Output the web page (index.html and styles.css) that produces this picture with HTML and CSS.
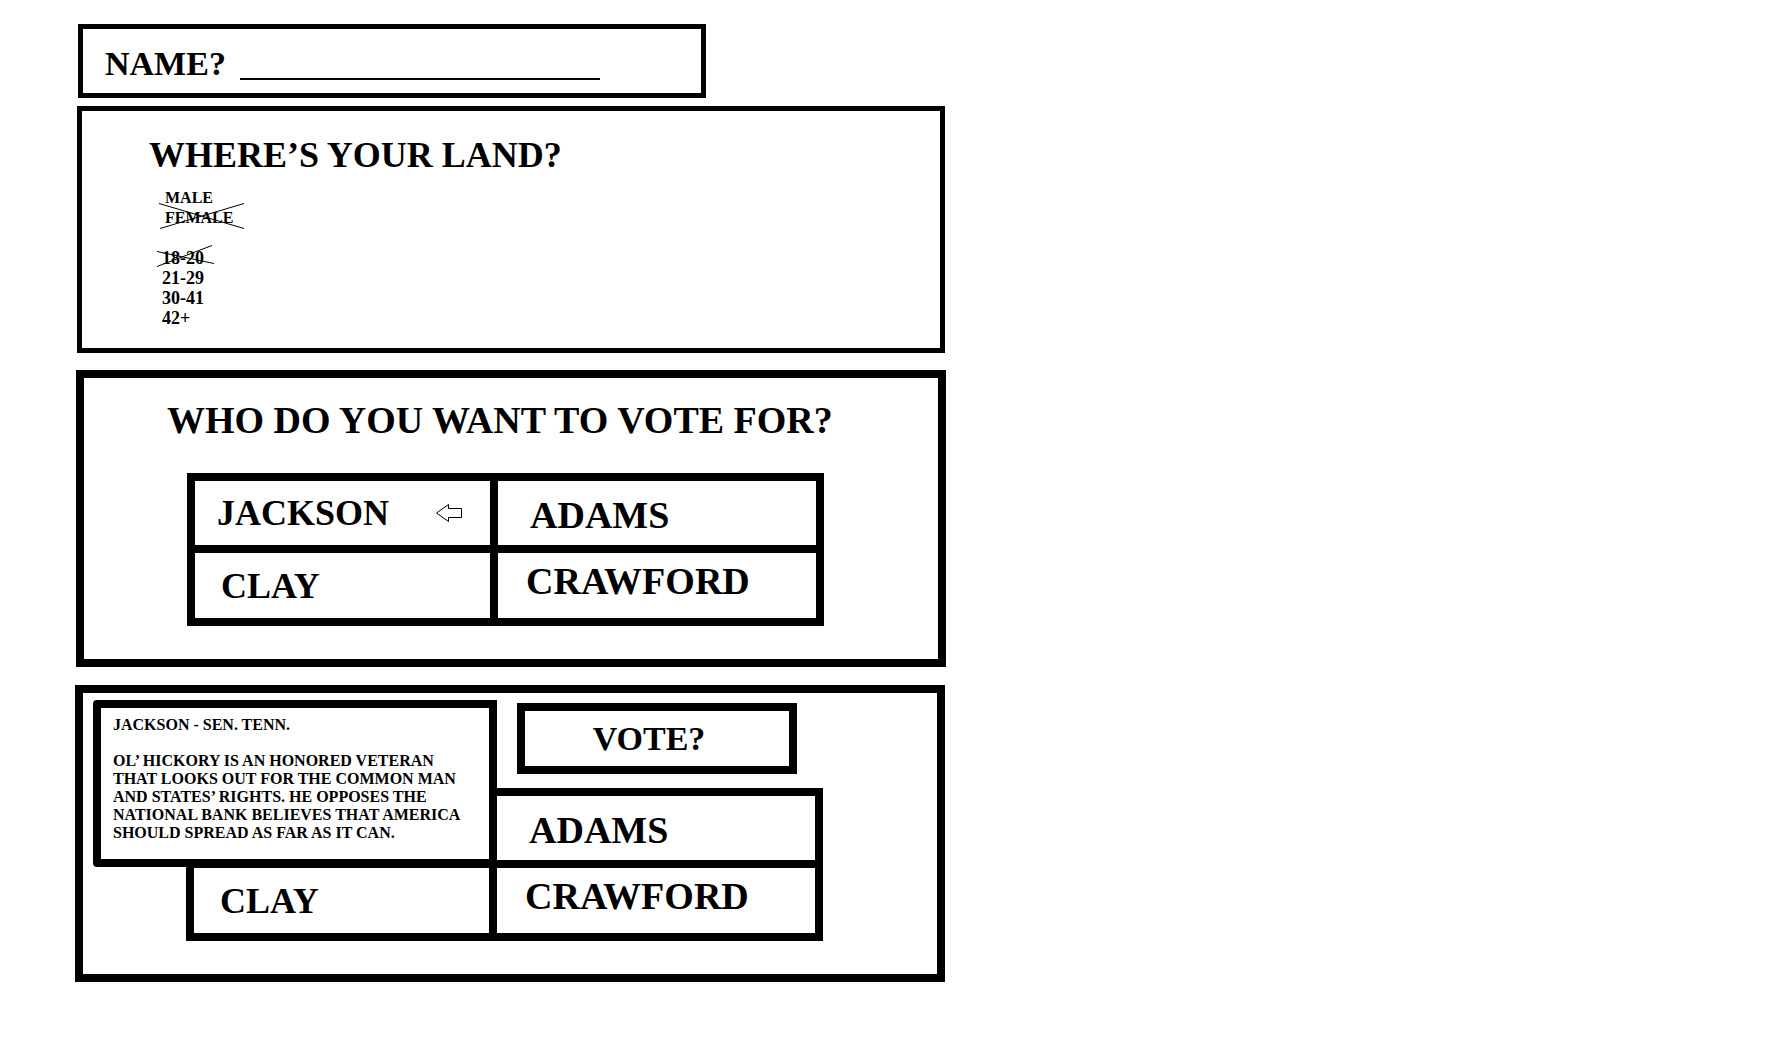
FILE: index.html
```html
<!DOCTYPE html>
<html lang="en">
<head>
<meta charset="utf-8">
<title>Ballot</title>
<link rel="stylesheet" href="styles.css">
</head>
<body>
<main class="ballot">
  <form class="name-panel">
    <label for="voter">NAME?</label>
    <input class="name-input" id="voter" type="text">
  </form>

  <section class="land-panel">
    <h2 class="title">WHERE’S YOUR LAND?</h2>
    <ul class="options sexes">
      <li>MALE</li>
      <li class="struck">FEMALE
        <svg class="cross cross-wide" width="86" height="26" viewBox="0 0 86 26" aria-hidden="true"><path d="M0 0.5 85 25.5M1 25.5 85 0.5"/></svg>
      </li>
    </ul>
    <ul class="options ages">
      <li class="struck">18-20
        <svg class="cross" width="58" height="22" viewBox="0 0 58 22" aria-hidden="true"><path d="M0 6.500 57 18.500M0 21.500 55 0.500"/></svg>
      </li>
      <li>21-29</li>
      <li>30-41</li>
      <li>42+</li>
    </ul>
  </section>

  <section class="panel choose-panel">
    <h2 class="title title-large">WHO DO YOU WANT TO VOTE FOR?</h2>
    <div class="candidates">
      <button class="candidate" type="button">JACKSON
        <svg width="26" height="18" viewBox="0 0 26 18" aria-hidden="true"><path d="M.5 9 12.500.5V4.500H25.500V13.500H12.500V17.500Z"/></svg>
      </button>
      <button class="candidate right lowered" type="button">ADAMS</button>
      <button class="candidate left" type="button">CLAY</button>
      <button class="candidate right raised" type="button">CRAWFORD</button>
    </div>
  </section>

  <section class="panel confirm-panel">
    <div class="actions"><button class="vote" type="button">VOTE?</button></div>
    <div class="candidates">
      <div class="candidate selected">
        <article class="bio">
          <h3>JACKSON - SEN. TENN.</h3>
          <p>OL’ HICKORY IS AN HONORED VETERAN THAT LOOKS OUT FOR THE COMMON MAN AND STATES’ RIGHTS. HE OPPOSES THE NATIONAL BANK BELIEVES THAT AMERICA SHOULD SPREAD AS FAR AS IT CAN.</p>
        </article>
      </div>
      <button class="candidate right lowered" type="button">ADAMS</button>
      <button class="candidate left" type="button">CLAY</button>
      <button class="candidate right raised" type="button">CRAWFORD</button>
    </div>
  </section>
</main>
</body>
</html>
```
FILE: styles.css
```css
* {
  box-sizing: border-box;
}

body {
  margin: 0;
  background: #fff;
  color: #000;
  font: bold 16px/20px "Liberation Serif", serif;
}

h2, h3, p, ul {
  margin: 0;
  padding: 0;
  font-weight: bold;
}

button, input {
  margin: 0;
  border: 0;
  border-radius: 0;
  background: #fff;
  color: inherit;
  font: inherit;
}

svg {
  fill: none;
  stroke: #000;
  stroke-width: 1;
}

.ballot {
  width: calc(50% - 16px);
  min-width: 800px;
  margin: 24px 0 0 76px;
}

.title {
  font-size: 36px;
  line-height: 32px;
  white-space: nowrap;
}

.title-large {
  font-size: 38px;
}

/* Name */
.name-panel {
  display: flex;
  align-items: flex-end;
  gap: 14px;
  width: calc(72% + 2px);
  margin: 0 0 8px 2px;
  padding: 19px 20px 13px 22px;
  border: 5px solid;
  font-size: 34px;
  line-height: 32px;
}

.name-input {
  width: 360px;
  height: 32px;
  padding: 0;
  border-bottom: 2px solid;
  outline: 0;
}

/* Land, sex and age */
.land-panel {
  margin: 0 1px 17px;
  padding: 28px 67px 20px;
  border: 5px solid;
}

.options {
  list-style: none;
}

.sexes {
  margin: 17px 0 20px 16px;
}

.ages {
  margin-left: 13px;
  font-size: 18px;
}

.struck {
  position: relative;
}

.cross {
  position: absolute;
  left: -5px;
  top: -3px;
}

.cross-wide {
  left: -6px;
  top: -5px;
}

/* Voting panels */
.panel {
  border: 8px solid;
}

.choose-panel {
  margin-bottom: 18px;
  padding: 26px 114px 33px 103px;
}

.choose-panel .title {
  margin: 0 -60px 37px -20px;
}

.confirm-panel {
  margin: 0 1px 24px -1px;
  padding: 10px 114px 33px 103px;
}

.candidates {
  display: grid;
  grid-template-columns: 295fr 318fr;
  grid-template-rows: 64px 65px;
  gap: 8px;
  border: 8px solid;
  background: #000;
}

.candidate {
  display: flex;
  align-items: center;
  justify-content: space-between;
  padding: 0 28px 0 22px;
  background: #fff;
  font-size: 36px;
  line-height: 32px;
  text-align: left;
}

.left {
  padding-left: 26px;
}

.right {
  padding-left: 28px;
  font-size: 38px;
}

.lowered {
  padding-top: 4px;
  padding-left: 32px;
}

.raised {
  padding-bottom: 10px;
}

.actions {
  display: flex;
  justify-content: flex-end;
  margin-bottom: 14px;
  padding-right: 26px;
}

.vote {
  width: 280px;
  padding: 20px 16px 19px 0;
  border: 8px solid;
  font-size: 34px;
  line-height: 16px;
}

/* Biography card over the selected candidate */
.selected {
  position: relative;
}

.bio {
  position: absolute;
  right: -8px;
  bottom: -7px;
  width: 404px;
  padding: 8px 12px 17px;
  border: 8px solid;
  border-radius: 4px 0 0 4px;
  background: #fff;
  font-size: 16px;
  line-height: 18px;
}

.bio h3 {
  margin-bottom: 18px;
  font-size: 16px;
}
```
